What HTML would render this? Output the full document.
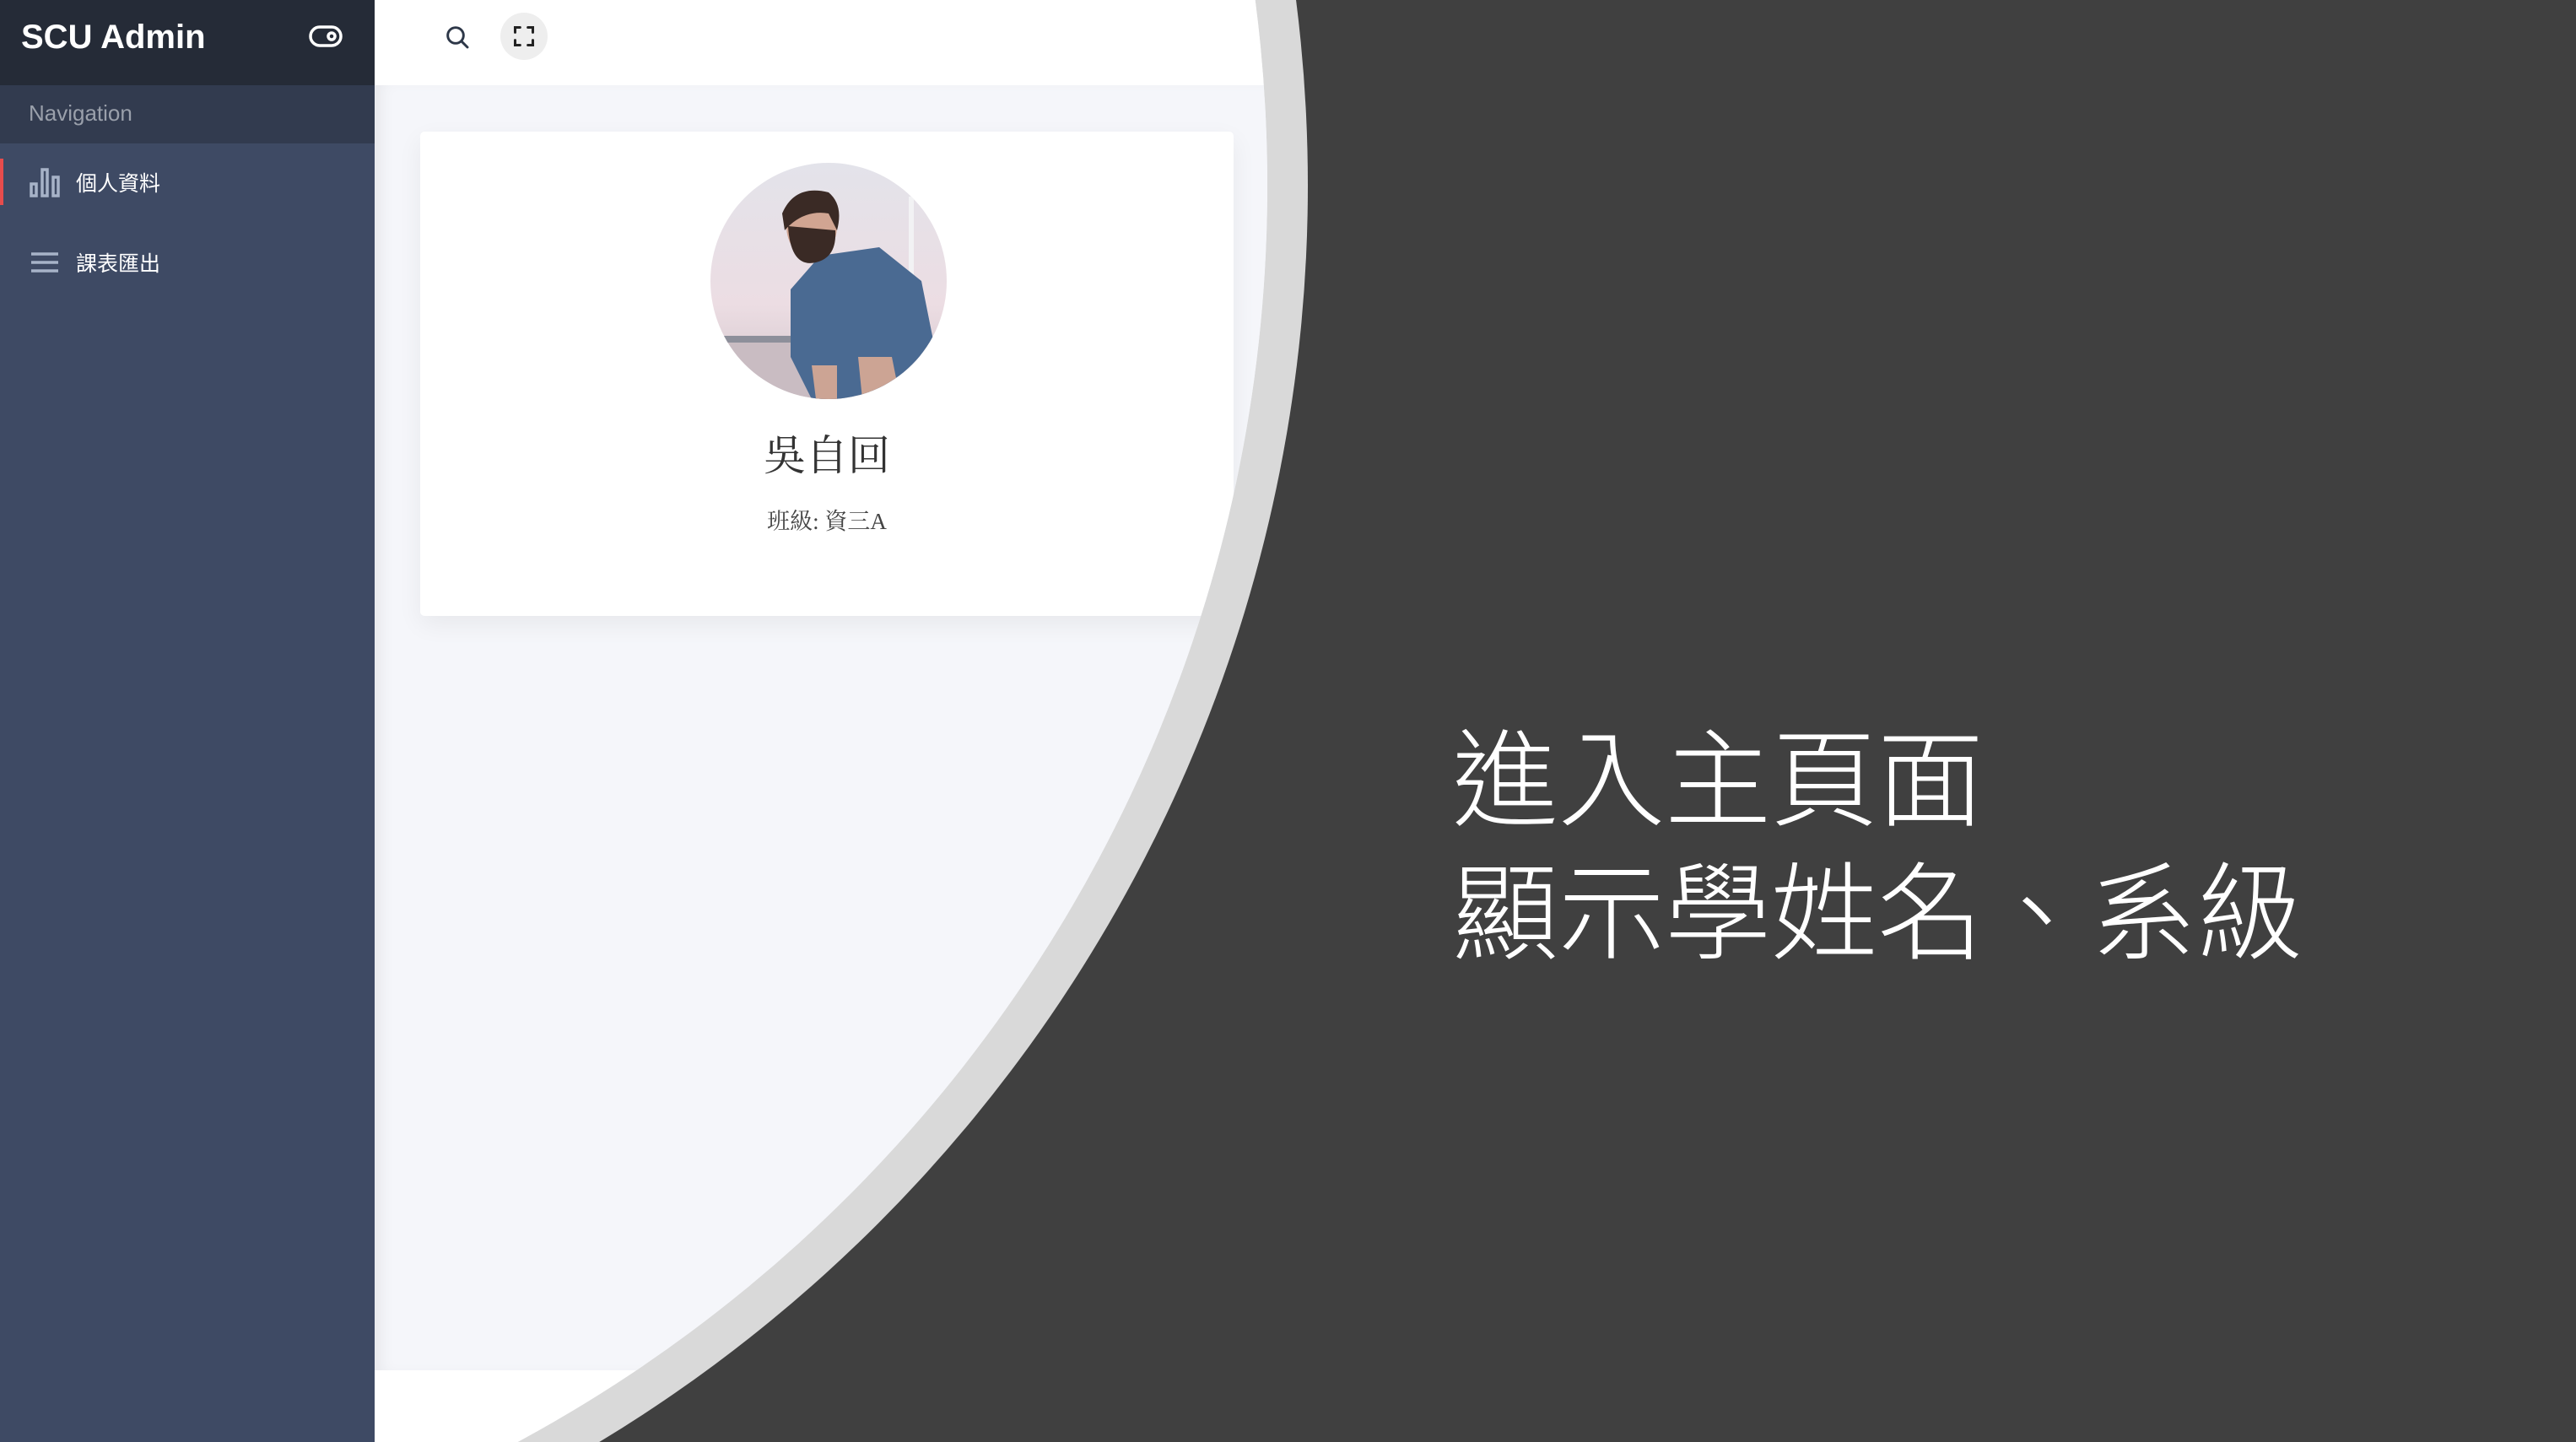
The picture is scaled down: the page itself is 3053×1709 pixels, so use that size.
<!DOCTYPE html>
<html><head><meta charset="utf-8"><style>
*{margin:0;padding:0;box-sizing:border-box}
html,body{width:3053px;height:1709px;overflow:hidden;background:#404040;font-family:"Liberation Sans","Noto Sans CJK TC",sans-serif}
#root{position:relative;width:3053px;height:1709px;overflow:hidden;background:#404040}
.ring{position:absolute;left:0;top:0;width:3053px;height:1709px;clip-path:circle(1740px at -190px 220px);background:#d9d9d9}
.page{position:absolute;left:0;top:0;width:3053px;height:1709px;clip-path:circle(1692px at -190px 220px);background:#f5f6fa}
.sb{position:absolute;left:0;top:0;width:444px;height:1709px;background:#3e4a64}
.sbh{height:101px;background:#252b37;position:relative}
.sbh .t{position:absolute;left:25px;top:22px;color:#fff;font-weight:bold;font-size:40px}
.nav{height:69px;background:#323b4f;color:#9aa0ab;font-size:26px;padding:18px 0 0 34px}
.item{position:absolute;left:0;width:444px;height:56px;color:#fff;font-size:25px}
.item span{position:absolute;left:90px;top:10px}
.hdr{position:absolute;left:444px;top:0;width:2609px;height:101px;background:#fff;box-shadow:0 2px 6px rgba(0,0,0,.04)}
.main{position:absolute;left:444px;top:101px;width:2609px;height:1523px;background:#f5f6fa;box-shadow:inset 14px 0 20px -10px rgba(0,0,0,.08)}
.foot{position:absolute;left:444px;top:1624px;width:2609px;height:85px;background:#fff}
.card{position:absolute;left:498px;top:156px;width:964px;height:574px;background:#fff;border-radius:5px;box-shadow:0 10px 30px rgba(0,0,0,.06)}
.av{position:absolute;left:842px;top:193px;width:280px;height:280px;border-radius:50%;overflow:hidden;background:linear-gradient(#e3e3ea,#ecdde3 60%,#cfc3c8)}
.name{position:absolute;left:498px;width:964px;top:500px;text-align:center;font-family:"Liberation Serif","Noto Serif CJK SC",serif;font-size:50px;color:#333}
.cls{position:absolute;left:498px;width:964px;top:596px;text-align:center;font-family:"Liberation Serif","Noto Serif CJK SC",serif;font-size:27px;color:#444}
.big{position:absolute;left:1721px;top:836px;color:#fff;font-family:"Noto Sans CJK TC","WenQuanYi Zen Hei",sans-serif;font-weight:300;font-size:126px;line-height:158px;white-space:nowrap}
</style></head><body><div id="root">
<div class="ring"></div>
<div class="page">
  <div class="hdr">
    <svg style="position:absolute;left:82px;top:28px" width="32" height="32" viewBox="0 0 24 24" fill="none" stroke="#2d3748" stroke-width="2.2" stroke-linecap="round"><circle cx="10.5" cy="10.5" r="7"/><path d="M16 16l5 5"/></svg>
    <div style="position:absolute;left:149px;top:15px;width:56px;height:56px;border-radius:50%;background:#eeeeee"></div>
    <svg style="position:absolute;left:163px;top:29px" width="28" height="28" viewBox="0 0 24 24" fill="none" stroke="#222" stroke-width="2.6" stroke-linecap="round"><path d="M3 8V3h5M16 3h5v5M21 16v5h-5M8 21H3v-5"/></svg>
  </div>
  <div class="main"></div>
  <div class="foot"></div>
  <div class="card"></div>
  <div class="av">
    <svg width="280" height="280" viewBox="0 0 280 280">
      <rect x="0" y="210" width="280" height="70" fill="#c9bcc2"/>
      <rect x="0" y="205" width="120" height="8" fill="#8d8f9a"/>
      <rect x="235" y="40" width="6" height="150" fill="#f2f2f4"/>
      <path d="M95 150 L130 110 L200 100 L250 140 L270 240 L230 280 L120 280 L95 230 Z" fill="#4a6a92"/>
      <path d="M175 230 L215 230 L225 280 L180 280 Z" fill="#cca494"/>
      <path d="M120 240 L150 240 L150 280 L125 280 Z" fill="#cca494"/>
      <ellipse cx="120" cy="75" rx="30" ry="38" fill="#d1a592"/>
      <path d="M92 75 Q95 125 125 118 Q150 112 148 80 Z" fill="#3a2a25"/>
      <path d="M85 60 Q100 25 140 35 Q158 50 150 80 L140 60 Q110 55 88 80 Z" fill="#3a2a25"/>
    </svg>
  </div>
  <div class="name">吳自回</div>
  <div class="cls">班級: 資三A</div>
  <div class="sb">
    <div class="sbh"><div class="t">SCU Admin</div>
      <svg style="position:absolute;left:366px;top:29px" width="40" height="28" viewBox="0 0 40 28" fill="none" stroke="#fff" stroke-width="3.5"><rect x="2" y="3" width="36" height="22" rx="11"/><circle cx="27" cy="14" r="4"/></svg>
    </div>
    <div class="nav">Navigation</div>
    <div class="item" style="top:188px"><div style="position:absolute;left:0;top:0;width:4px;height:55px;background:#e74c4c"></div>
      <svg style="position:absolute;left:35px;top:10px" width="38" height="36" viewBox="0 0 38 36" fill="none" stroke="#a7b3c8" stroke-width="3.5"><rect x="2" y="20" width="6" height="14"/><rect x="15" y="3" width="6" height="31"/><rect x="28" y="12" width="6" height="22"/></svg>
      <span>個人資料</span></div>
    <div class="item" style="top:283px">
      <svg style="position:absolute;left:37px;top:15px" width="32" height="26" viewBox="0 0 32 26" stroke="#a7b3c8" stroke-width="3.5"><path d="M0 3h32M0 13h32M0 23h32"/></svg>
      <span>課表匯出</span></div>
  </div>
</div>
<div class="big">進入主頁面<br>顯示學姓名、系級</div>
</div></body></html>
